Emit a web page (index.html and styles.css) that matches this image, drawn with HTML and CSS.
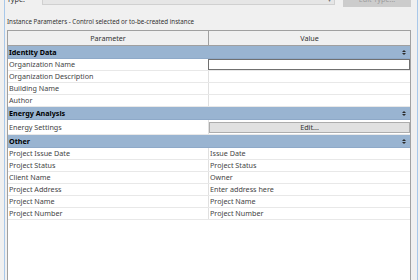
FILE: index.html
```html
<!DOCTYPE html>
<html>
<head>
<meta charset="utf-8">
<link rel="stylesheet" href="styles.css">
</head>
<body>
<div class="frame">
  <div class="topbar">
    <span class="type-label">Type:</span>
    <div class="combo"><span class="combo-arrow">&#9662;</span></div>
    <div class="btn-edit-type">Edit Type...</div>
  </div>
  <div class="caption">Instance Parameters - Control selected or to-be-created instance</div>
  <div class="table">
    <div class="thead">
      <div class="th th-param">Parameter</div>
      <div class="th th-value">Value</div>
    </div>
    <div class="group"><span>Identity Data</span><svg class="collapse" width="4" height="5" viewBox="0 0 4 5"><path d="M0 2 L2 0 L4 2 Z M0 3 L2 5 L4 3 Z" fill="#2a2a2a"/></svg></div>
    <div class="row"><div class="cell-p">Organization Name</div><div class="cell-v editing"></div></div>
    <div class="row"><div class="cell-p">Organization Description</div><div class="cell-v"></div></div>
    <div class="row"><div class="cell-p">Building Name</div><div class="cell-v"></div></div>
    <div class="row"><div class="cell-p">Author</div><div class="cell-v"></div></div>
    <div class="group"><span>Energy Analysis</span><svg class="collapse" width="4" height="5" viewBox="0 0 4 5"><path d="M0 2 L2 0 L4 2 Z M0 3 L2 5 L4 3 Z" fill="#2a2a2a"/></svg></div>
    <div class="row row-energy"><div class="cell-p">Energy Settings</div><div class="cell-v"><div class="btn-edit">Edit...</div></div></div>
    <div class="group"><span>Other</span><svg class="collapse" width="4" height="5" viewBox="0 0 4 5"><path d="M0 2 L2 0 L4 2 Z M0 3 L2 5 L4 3 Z" fill="#2a2a2a"/></svg></div>
    <div class="row"><div class="cell-p">Project Issue Date</div><div class="cell-v">Issue Date</div></div>
    <div class="row"><div class="cell-p">Project Status</div><div class="cell-v">Project Status</div></div>
    <div class="row"><div class="cell-p">Client Name</div><div class="cell-v">Owner</div></div>
    <div class="row"><div class="cell-p">Project Address</div><div class="cell-v">Enter address here</div></div>
    <div class="row"><div class="cell-p">Project Name</div><div class="cell-v">Project Name</div></div>
    <div class="row"><div class="cell-p">Project Number</div><div class="cell-v">Project Number</div></div>
  </div>
</div>
</body>
</html>
```
FILE: styles.css
```css
* { box-sizing: border-box; }
html, body { margin: 0; height: 100%; }
body {
  background: #f0f0f0;
  font-family: "Noto Sans", "Liberation Sans", sans-serif;
  font-size: 7.2px;
  color: #444;
  overflow: hidden;
}
.frame {
  margin-left: 4px;
  width: 414px;
  height: 280px;
  border-left: 1px solid #a8c8ea;
  border-right: 1px solid #a8c8ea;
  padding: 0 6px 0 2px;
  display: flex;
  flex-direction: column;
}
.topbar {
  display: flex;
  align-items: flex-end;
  height: 16px;
  margin-top: -9px;
  flex: none;
}
.type-label {
  width: 35px;
  line-height: 10px;
  margin-bottom: 3px;
  color: #333;
}
.combo {
  width: 293px;
  height: 14px;
  margin-bottom: 2px;
  background: #e6e6e6;
  border: 1px solid #d0d0d0;
  display: flex;
  justify-content: flex-end;
  align-items: center;
  padding-right: 3px;
}
.combo-arrow { font-size: 6px; color: #777; line-height: 6px; margin-top: 4px; }
.btn-edit-type {
  margin-left: 8px;
  width: 68px;
  height: 16px;
  background: #cccccc;
  color: #9c9c9c;
  display: flex;
  align-items: center;
  justify-content: center;
}
.caption {
  margin-top: 10px;
  line-height: 10px;
  height: 10px;
  font-size: 6.2px;
  color: #333;
  flex: none;
}
.table {
  margin-top: 3px;
  flex: 1;
  background: #fff;
  border-left: 1px solid #a0a0a0;
  border-right: 1px solid #a0a0a0;
  display: flex;
  flex-direction: column;
}
.thead {
  display: grid;
  grid-template-columns: 201px 1fr;
  height: 16px;
  background: #f0f0f0;
  border-top: 1px solid #a0a0a0;
  border-bottom: 1px solid #a0a0a0;
  flex: none;
}
.th {
  display: flex;
  align-items: center;
  justify-content: center;
  color: #333;
}
.th-param { border-right: 1px solid #a0a0a0; }
.group {
  height: 13px;
  background: #99b4d1;
  border-bottom: 1px solid #8ea9c8;
  font-weight: bold;
  color: #000;
  display: flex;
  align-items: center;
  justify-content: space-between;
  padding: 0 4px 0 1px;
  flex: none;
}
.collapse { display: block; }
.row {
  display: grid;
  grid-template-columns: 201px 1fr;
  height: 12px;
  border-bottom: 1px solid #e8e8e8;
  flex: none;
}
.cell-p {
  padding-left: 1px;
  border-right: 1px solid #e0e0e0;
  line-height: 11px;
  white-space: nowrap;
}
.cell-v {
  padding-left: 1px;
  line-height: 11px;
  white-space: nowrap;
}
.editing {
  border: 1px solid #707070;
  margin-left: -1px;
}
.row-energy { height: 15px; }
.row-energy .cell-p { line-height: 14px; }
.btn-edit {
  margin-top: 2px;
  height: 11px;
  background: #e1e1e1;
  border: 1px solid #adadad;
  color: #333;
  display: flex;
  align-items: center;
  justify-content: center;
  margin-left: -1px;
}
```
